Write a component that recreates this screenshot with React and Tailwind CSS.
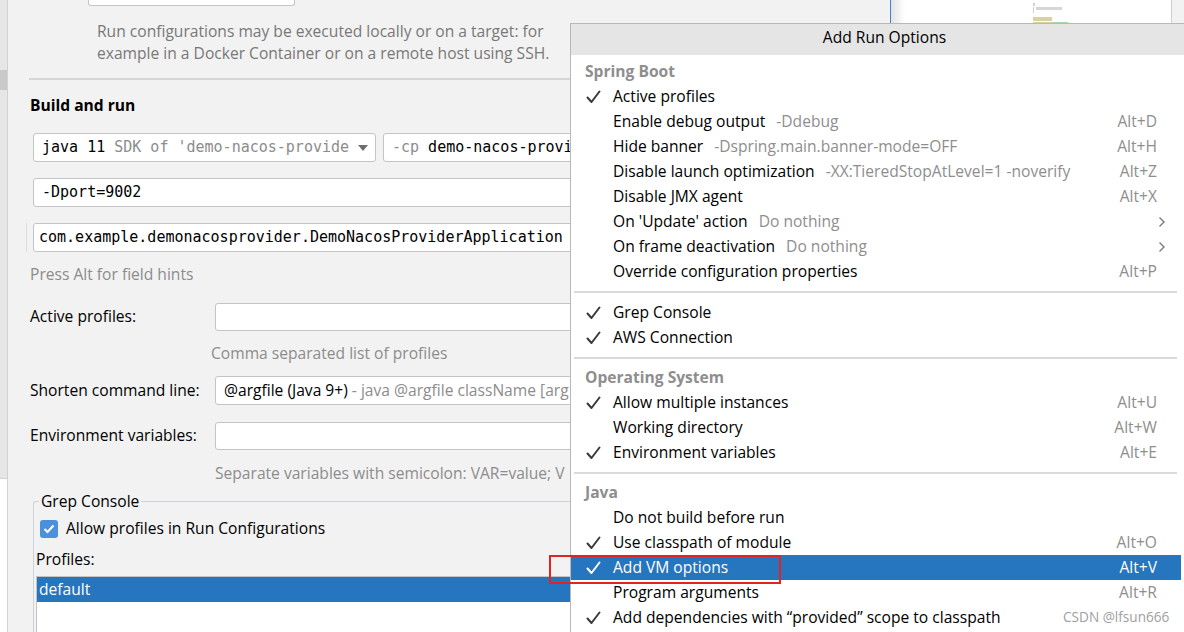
import React from 'react';

const mono = "font-['DejaVu_Sans_Mono',monospace] text-[15px]";

const Check = ({ white }) => (
  <svg width="15" height="14" viewBox="0 0 15 14" className="block">
    <path
      d="M1.5 7.5 L5.5 12 L13.5 1.5"
      fill="none"
      stroke={white ? '#ffffff' : '#3a3a3a'}
      strokeWidth="2"
      strokeLinecap="round"
      strokeLinejoin="round"
    />
  </svg>
);

const Chevron = () => (
  <svg width="8" height="12" viewBox="0 0 8 12" className="block">
    <path d="M1.5 1.5 L6 6 L1.5 10.5" fill="none" stroke="#7a7a7a" strokeWidth="1.4" />
  </svg>
);

const sections = [
  {
    title: 'Spring Boot',
    items: [
      { label: 'Active profiles', checked: true },
      { label: 'Enable debug output', hint: '-Ddebug', keys: 'Alt+D' },
      { label: 'Hide banner', hint: '-Dspring.main.banner-mode=OFF', keys: 'Alt+H' },
      { label: 'Disable launch optimization', hint: '-XX:TieredStopAtLevel=1 -noverify', keys: 'Alt+Z' },
      { label: 'Disable JMX agent', keys: 'Alt+X' },
      { label: "On 'Update' action", hint: 'Do nothing', submenu: true },
      { label: 'On frame deactivation', hint: 'Do nothing', submenu: true },
      { label: 'Override configuration properties', keys: 'Alt+P' },
    ],
  },
  {
    gap: 16,
    items: [
      { label: 'Grep Console', checked: true },
      { label: 'AWS Connection', checked: true },
    ],
  },
  {
    gap: 15,
    title: 'Operating System',
    items: [
      { label: 'Allow multiple instances', checked: true, keys: 'Alt+U' },
      { label: 'Working directory', keys: 'Alt+W' },
      { label: 'Environment variables', checked: true, keys: 'Alt+E' },
    ],
  },
  {
    gap: 15,
    title: 'Java',
    items: [
      { label: 'Do not build before run' },
      { label: 'Use classpath of module', checked: true, keys: 'Alt+O' },
      { label: 'Add VM options', checked: true, keys: 'Alt+V', selected: true },
      { label: 'Program arguments', keys: 'Alt+R' },
      { label: 'Add dependencies with \u201cprovided\u201d scope to classpath', checked: true },
    ],
  },
];

const MenuItem = ({ item }) => (
  <div
    className={`flex h-[25px] items-center pl-[15px] pr-[24px] ${
      item.selected ? 'bg-[#2675bf] text-white' : 'text-black'
    }`}
  >
    <div className="w-[27px]">{item.checked && <Check white={item.selected} />}</div>
    <span className="whitespace-nowrap">{item.label}</span>
    {item.hint && <span className="ml-[11px] whitespace-nowrap text-[#8e8e8e]">{item.hint}</span>}
    {item.keys && (
      <span className={`ml-auto whitespace-nowrap ${item.selected ? 'text-white' : 'text-[#8e8e8e]'}`}>
        {item.keys}
      </span>
    )}
    {item.submenu && (
      <span className="ml-auto mr-[-9px]">
        <Chevron />
      </span>
    )}
  </div>
);

const Separator = ({ h }) => (
  <div className={`flex items-center pl-[3px] pr-[4px] ${h === 16 ? 'h-[16px]' : 'h-[15px]'}`}>
    <div className="h-[2px] w-full bg-[#dadada]" />
  </div>
);

const RunOptionsPopup = () => (
  <div className="absolute left-[570px] top-[23px] flex h-[609px] w-[614px] flex-col border-l border-t border-[#b8b8b8] bg-white">
    <div className="flex h-[31px] items-center justify-center bg-[#e5e5e5] pb-[3px] pl-[14px] text-black">
      Add Run Options
    </div>
    <div className="w-[610px] pt-[4px]">
      {sections.map((section, i) => (
        <div key={i}>
          {i > 0 && <Separator h={section.gap} />}
          {section.title && (
            <div className="flex h-[25px] items-center pl-[14px] font-bold text-[#8e8e8e]">{section.title}</div>
          )}
          {section.items.map((item) => (
            <MenuItem key={item.label} item={item} />
          ))}
        </div>
      ))}
    </div>
  </div>
);

const Box = ({ className = '', children }) => (
  <div className={`flex shrink-0 items-center overflow-hidden rounded-[3px] border border-[#c4c4c4] bg-white ${className}`}>
    {children}
  </div>
);

const SettingsPanel = () => (
  <div className="flex w-[882px] shrink-0 flex-col self-start pl-[22px]">
    {/* cut-off field at the top */}
    <div className="h-[6px]">
      <div className="ml-[58px] h-[6px] w-[207px] rounded-b-[3px] border border-t-0 border-[#c4c4c4] bg-white" />
    </div>

    <div className="ml-[67px] mt-[14px] leading-[22px] text-[#787878]">
      <div>Run configurations may be executed locally or on a target: for</div>
      <div>example in a Docker Container or on a remote host using SSH.</div>
    </div>

    <div className="ml-[-1px] mt-[14px] h-[2px] bg-[#d6d6d6]" />

    <div className="mt-[14px] font-bold leading-[22px]">Build and run</div>

    <div className="ml-[3px] mt-[17px] flex h-[29px] gap-[7px]">
      <Box className={`w-[343px] pl-[8px] ${mono}`}>
        <span className="whitespace-nowrap">
          java 11 <span className="text-[#8c8c8c]">SDK of 'demo-nacos-provide</span>
        </span>
        <svg width="12" height="8" viewBox="0 0 12 8" className="ml-auto mr-[6px]">
          <path d="M1 1 L11 1 L6 7 Z" fill="#6e6e6e" />
        </svg>
      </Box>
      <Box className={`w-[196px] pl-[8px] ${mono}`}>
        <span className="whitespace-nowrap">
          <span className="text-[#8c8c8c]">-cp</span> demo-nacos-provi
        </span>
      </Box>
    </div>

    <Box className={`ml-[3px] mt-[16px] h-[29px] pl-[8px] ${mono}`}>-Dport=9002</Box>

    <div className="mt-[16px] flex">
      <div className="ml-[-4px] mr-[6px] w-px bg-[#dcdcdc]" />
      <Box className={`h-[29px] flex-1 pl-[5px] ${mono}`}>
        <span className="whitespace-nowrap">com.example.demonacosprovider.DemoNacosProviderApplication</span>
      </Box>
    </div>

    <div className="mt-[11px] leading-[22px] text-[#8c8c8c]">Press Alt for field hints</div>

    <div className="mt-[18px] flex items-center">
      <div className="w-[185px]">Active profiles:</div>
      <Box className="h-[28px] flex-1" />
    </div>
    <div className="ml-[181px] mt-[11px] leading-[22px] text-[#8c8c8c]">Comma separated list of profiles</div>

    <div className="mt-[12px] flex items-center">
      <div className="w-[185px]">Shorten command line:</div>
      <Box className="h-[29px] flex-1 pl-[8px]">
        <span className="w-[346px] shrink-0 overflow-hidden whitespace-nowrap">
          @argfile (Java 9+) <span className="text-[#8c8c8c]">- java @argfile className [arg</span>
        </span>
      </Box>
    </div>

    <div className="mt-[17px] flex items-center">
      <div className="w-[185px]">Environment variables:</div>
      <Box className="h-[28px] flex-1" />
    </div>
    <div className="ml-[185px] mt-[12px] w-[354px] overflow-hidden whitespace-nowrap leading-[22px] text-[#8c8c8c]">
      Separate variables with semicolon: VAR=value; V
    </div>

    <fieldset className="ml-[3px] mt-[6px] rounded-tl-[3px] border border-b-0 border-r-0 border-[#cdd3da]">
      <legend className="ml-[5px] px-[2px] leading-[22px]">Grep Console</legend>
      <div className="ml-[6px] mt-[6px] flex h-[22px] items-center">
        <div className="flex h-[18px] w-[18px] items-center justify-center rounded-[3px] bg-[#4a90dc]">
          <svg width="12" height="10" viewBox="0 0 12 10">
            <path d="M1.5 5 L4.5 8 L10.5 1.5" fill="none" stroke="#fff" strokeWidth="2" />
          </svg>
        </div>
        <span className="ml-[8px]">Allow profiles in Run Configurations</span>
      </div>
      <div className="ml-[2px] mt-[8px] leading-[22px]">Profiles:</div>
      <div className="ml-[2px] mt-[6px] h-[60px] border border-[#c4c4c4] bg-white">
        <div className="flex h-[25px] items-center bg-[#2675bf] pl-[2px] text-white">default</div>
      </div>
    </fieldset>
  </div>
);

export default function App() {
  return (
    <div className="relative h-[632px] w-[1184px] overflow-hidden bg-[#f2f2f2] font-['Open_Sans',sans-serif] text-[15.6px] text-black">
      <div className="flex h-full">
        {/* left scroll strip */}
        <div className="flex w-[8px] shrink-0 flex-col border-r border-[#d2d2d2]">
          <div className="h-[478px] bg-[#e6e6e6] pt-[70px]">
            <div className="h-[20px] bg-[#c9c9c9]" />
          </div>
          <div className="flex-1 border-t border-[#d2d2d2] bg-white" />
        </div>

        <SettingsPanel />

        {/* editor area behind the popup */}
        <div className="flex h-full flex-1 border-l border-[#3f82cc] bg-white">
          <div className="w-[14px] bg-gradient-to-r from-[#e2e2e2] to-white" />
          <div className="flex w-[266px] flex-col pl-[128px] pt-[3px]">
            <div className="flex items-center gap-[2px]">
              <div className="h-[3px] w-[2px] bg-[#d0d0d0]" />
            </div>
            <div className="mt-[1px] flex gap-[2px]">
              <div className="h-[6px] w-px bg-[#d0d0d0]" />
              <div className="h-[3px] w-[26px] bg-[#d6d6d6]" />
            </div>
            <div className="mt-[4px] h-[4px] w-[19px] bg-[#d9d1a1]" />
            <div className="mt-[1px] flex">
              <div className="h-[4px] w-[19px] bg-[#d9d1a1]" />
              <div className="h-[4px] w-[16px] bg-[#a9d7ab]" />
            </div>
          </div>
          <div className="flex-1 border-l border-[#cfcfcf] bg-[#f2f2f2]" />
        </div>
      </div>

      <RunOptionsPopup />

      {/* highlight around "Add VM options" */}
      <div className="absolute left-[549px] top-[555px] h-[29px] w-[232px] border-2 border-[#e22323]" />

      <div className="absolute left-[1063px] top-[607px] text-[13.6px] leading-[20px] text-[#a0a0a0]">CSDN @lfsun666</div>
    </div>
  );
}
